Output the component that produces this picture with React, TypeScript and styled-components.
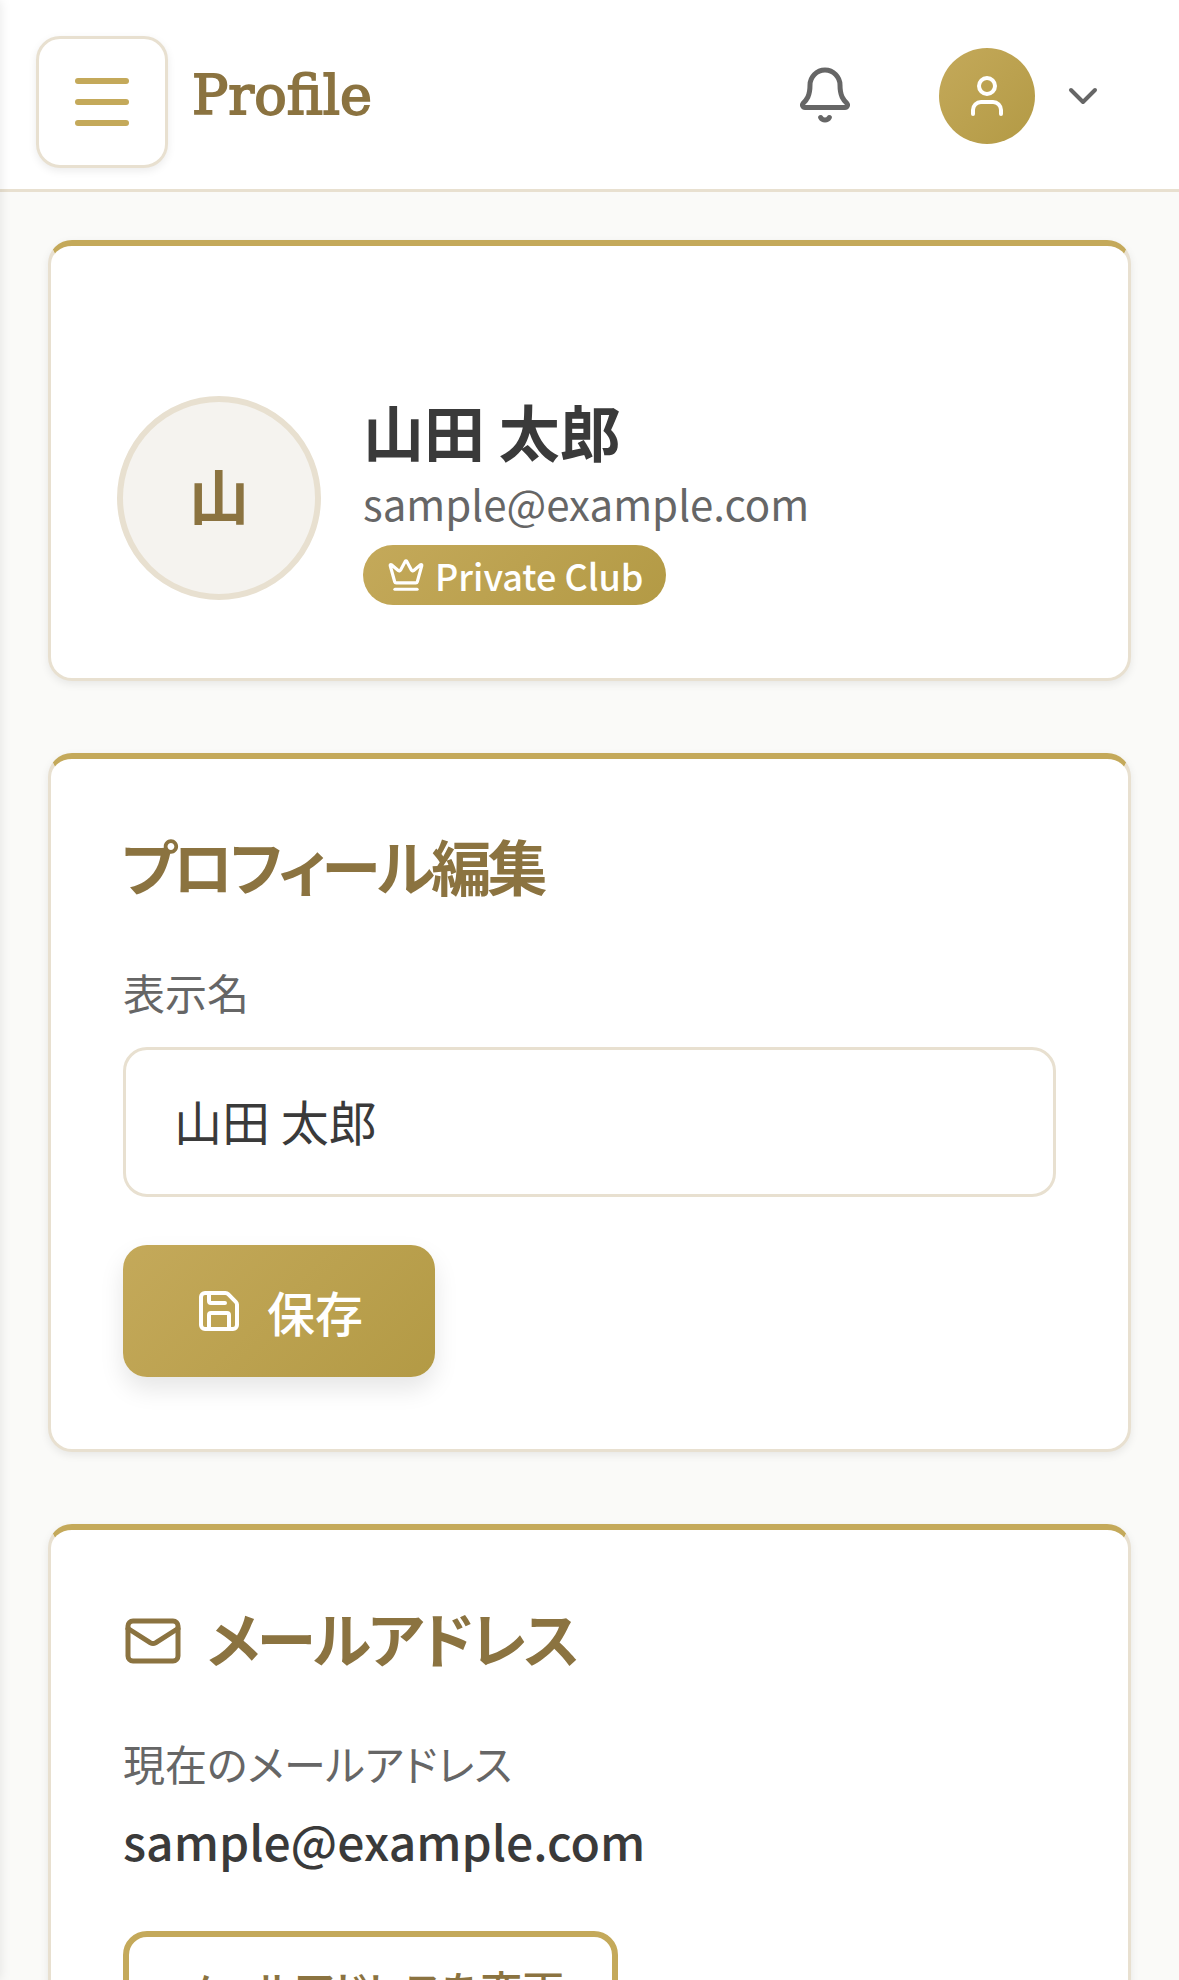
import { createGlobalStyle } from "styled-components";
import styled from "styled-components";
import { Bell, ChevronDown, Crown, Mail, Menu, Save, User } from "lucide-react";

const GlobalStyle = createGlobalStyle`
  html, body {
    margin: 0;
    padding: 0;
    background: #fafaf8;
  }
  * {
    box-sizing: border-box;
  }
  body {
    font-family: "Noto Sans CJK JP", "Noto Sans", sans-serif;
    font-feature-settings: "palt";
    color: #3a3a3a;
  }
`;

const gold = "linear-gradient(135deg, #c4a95a 0%, #b39a45 100%)";

const Page = styled.div`
  height: 1980px;
  overflow: hidden;
`;

const Drawer = styled.div`
  position: fixed;
  top: 0;
  left: -12px;
  width: 12px;
  height: 100%;
  box-shadow: 0 0 12px rgba(0, 0, 0, 0.1);
`;

const TopBar = styled.header`
  height: 192px;
  background: #fff;
  border-bottom: 3px solid #e8e0d0;
  display: flex;
  align-items: flex-start;
  padding: 36px 72px 0 36px;
`;

const MenuButton = styled.button`
  width: 132px;
  height: 132px;
  padding: 0;
  background: #fff;
  border: 3px solid #e8e0d0;
  border-radius: 24px;
  color: #c4a95a;
  box-shadow: 0 3px 9px rgba(0, 0, 0, 0.08);
  display: flex;
  align-items: center;
  justify-content: center;
`;

const Title = styled.h1`
  margin: 24px 0 0 24px;
  font-family: "DejaVu Serif", serif;
  font-size: 54px;
  line-height: 72px;
  font-weight: 400;
  -webkit-text-stroke: 1.8px #8b7340;
  color: #8b7340;
  flex: 1;
`;

const BellBox = styled.div`
  margin-top: 29px;
  color: #666;
  display: flex;
`;

const UserAvatar = styled.div`
  width: 96px;
  height: 96px;
  margin: 12px 0 0 84px;
  border-radius: 50%;
  background: ${gold};
  color: #fff;
  display: flex;
  align-items: center;
  justify-content: center;
`;

const Caret = styled.div`
  margin: 36px 0 0 24px;
  color: #666;
  display: flex;
`;

const Content = styled.main`
  padding: 48px;
  display: flex;
  flex-direction: column;
  gap: 72px;
`;

const Card = styled.section`
  background: #fff;
  border: 3px solid #e8e0d0;
  border-top: 6px solid #c4a95a;
  border-radius: 24px;
  padding: 72px;
  box-shadow: 0 3px 9px rgba(0, 0, 0, 0.08);
`;

const ProfileCard = styled(Card)`
  display: flex;
  align-items: flex-start;
  gap: 42px;
  padding: 150px 72px 78px 66px;
`;

const BigAvatar = styled.div`
  width: 204px;
  height: 204px;
  padding-bottom: 10px;
  border-radius: 50%;
  background: #f5f3ef;
  border: 6px solid #e8e0d0;
  color: #8b7340;
  font-size: 60px;
  font-weight: 700;
  display: flex;
  align-items: center;
  justify-content: center;
`;

const ProfileInfo = styled.div`
  margin: -5px 0 -6px;
  display: flex;
  flex-direction: column;
  align-items: flex-start;
`;

const Name = styled.h2`
  margin: 0;
  font-size: 61px;
  line-height: 80px;
  font-weight: 700;
  color: #3a3a3a;
`;

const Email = styled.div`
  font-size: 42px;
  line-height: 63px;
  color: #666;
`;

const Badge = styled.div`
  margin-top: 11px;
  height: 60px;
  padding: 0 23px 0 24px;
  border-radius: 30px;
  background: ${gold};
  color: #fff;
  font-size: 36px;
  font-weight: 500;
  display: flex;
  align-items: center;
  gap: 10px;
`;

const SectionTitle = styled.h3`
  margin: -1px 0 60px;
  font-size: 60px;
  line-height: 72px;
  font-weight: 700;
  letter-spacing: -3px;
  color: #8b7340;
  display: flex;
  align-items: center;
  gap: 24px;
`;

const EditTitle = styled(SectionTitle)`
  margin: -2px 0 61px -2px;
  letter-spacing: -3.8px;
`;

const TitleMail = styled(Mail)`
  margin-top: 8px;
`;

const Label = styled.div`
  font-size: 42px;
  line-height: 60px;
  color: #666;
`;

const NameInput = styled.input`
  display: block;
  width: 100%;
  height: 150px;
  margin: 25px 0 48px;
  padding: 0 48px 5px;
  border: 3px solid #e8e0d0;
  border-radius: 24px;
  font: inherit;
  font-size: 48px;
  color: #3a3a3a;
  background: #fff;
  outline: none;
`;

const SaveButton = styled.button`
  height: 132px;
  padding: 0 72px;
  border: 0;
  border-radius: 24px;
  background: ${gold};
  color: #fff;
  font: inherit;
  font-size: 48px;
  font-weight: 500;
  box-shadow: 0 12px 24px rgba(0, 0, 0, 0.1);
  display: flex;
  align-items: center;
  gap: 24px;
`;

const CurrentEmail = styled.div`
  margin-top: 11px;
  font-size: 48px;
  line-height: 72px;
  font-weight: 500;
  color: #3a3a3a;
`;

const OutlineButton = styled.button`
  margin-top: 55px;
  height: 114px;
  padding: 0 48px;
  background: #fff;
  border: 6px solid #c4a95a;
  border-radius: 24px;
  color: #8b7340;
  font: inherit;
  font-size: 42px;
  font-weight: 500;
`;

const App = () => {
  return (
    <Page>
      <GlobalStyle />
      <Drawer />
      <TopBar>
        <MenuButton>
          <Menu size={72} strokeWidth={2} />
        </MenuButton>
        <Title>Profile</Title>
        <BellBox>
          <Bell size={60} strokeWidth={2} />
        </BellBox>
        <UserAvatar>
          <User size={48} strokeWidth={2} />
        </UserAvatar>
        <Caret>
          <ChevronDown size={48} strokeWidth={2} />
        </Caret>
      </TopBar>
      <Content>
        <ProfileCard>
          <BigAvatar>山</BigAvatar>
          <ProfileInfo>
            <Name>山田 太郎</Name>
            <Email>sample@example.com</Email>
            <Badge>
              <Crown size={38} strokeWidth={2} />
              Private Club
            </Badge>
          </ProfileInfo>
        </ProfileCard>
        <Card>
          <EditTitle>プロフィール編集</EditTitle>
          <Label>表示名</Label>
          <NameInput defaultValue="山田 太郎" />
          <SaveButton>
            <Save size={48} strokeWidth={2} />
            保存
          </SaveButton>
        </Card>
        <Card>
          <SectionTitle>
            <TitleMail size={60} strokeWidth={2} />
            メールアドレス
          </SectionTitle>
          <Label>現在のメールアドレス</Label>
          <CurrentEmail>sample@example.com</CurrentEmail>
          <OutlineButton>メールアドレスを変更</OutlineButton>
        </Card>
      </Content>
    </Page>
  );
};

export default App;
